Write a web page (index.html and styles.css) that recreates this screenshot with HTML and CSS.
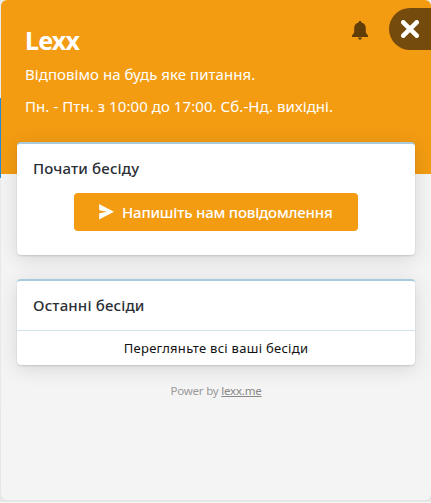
FILE: index.html
```html
<!DOCTYPE html>
<html lang="uk">
<head>
<meta charset="utf-8">
<title>Lexx</title>
<link rel="stylesheet" href="styles.css">
</head>
<body>
<div class="edge"></div>
<main class="panel">
  <header class="header">
    <h1 class="title"><span>Lexx</span></h1>
    <p class="line intro"><span>Відповімо на будь яке питання.</span></p>
    <p class="line hours"><span>Пн. - Птн. з 10:00 до 17:00. Сб.-Нд. вихідні.</span></p>
    <svg class="bell" viewBox="0 0 18 20"><path d="M9 1C8 1 7.600 1.600 7.600 2.500C4.700 3.200 3.200 5.200 3.200 8.200V12.600L1 15.400V16.900H17V15.400L14.800 12.600V8.200C14.800 5.200 13.300 3.200 10.400 2.500C10.400 1.600 10 1 9 1ZM7.200 17.500C7.200 20.400 10.800 20.400 10.800 17.500Z"/></svg>
    <button class="close" aria-label="Закрити"><svg viewBox="0 0 18 18"><path d="M2.300 2.300L15.700 15.700M15.700 2.300L2.300 15.700"/></svg></button>
  </header>
  <section class="card start">
    <h2 class="heading"><span>Почати бесіду</span></h2>
    <button class="send">
      <svg viewBox="0 0 16 16"><path d="M1 0L16 7.700L1 15.600L1.300 9.300L9 7.700L1.300 6.300Z"/></svg>
      <span>Напишіть нам повідомлення</span>
    </button>
  </section>
  <section class="card recent">
    <h2 class="heading"><span>Останні бесіди</span></h2>
    <div class="all"><span>Перегляньте всі ваші бесіди</span></div>
  </section>
  <footer class="footer"><span>Power by <a>lexx.me</a></span></footer>
</main>
</body>
</html>
```
FILE: styles.css
```css
* { box-sizing: border-box; }
body {
  margin: 0;
  height: 503px;
  overflow: hidden;
  display: flex;
  background: linear-gradient(#e9edf2 0 174px, #e9e9e9 180px, #e6e6e6 502px, #f8f8f8 502px);
  font-family: "Noto Sans", "Open Sans", sans-serif;
}
h1, h2, p { margin: 0; font-weight: inherit; }
button { border: 0; padding: 0; font: inherit; }
span { white-space: nowrap; }
.edge { width: 1px; height: 80px; margin-top: 98px; background: #2489db; }
.panel {
  position: relative;
  width: 430px;
  height: 500px;
  border-radius: 6px;
  overflow: hidden;
  background: #f4f4f4;
}
.header {
  height: 174px;
  padding: 23px 24px 0;
  background: #f39c12;
  color: #fff;
}
.title { height: 35px; font-size: 25px; line-height: 34px; font-weight: 700; letter-spacing: -.8px; }
.line { height: 32px; font-size: 15px; line-height: 32px; }
.intro { letter-spacing: .05px; }
.hours { letter-spacing: .07px; }
.bell { position: absolute; left: 350px; top: 20px; width: 18px; height: 20px; fill: #613e07; }
.close {
  position: absolute;
  left: 388px;
  top: 8px;
  width: 42px;
  height: 42px;
  border-radius: 21px 0 0 21px;
  background: #754b0d;
}
.close svg { display: block; width: 18px; height: 18px; margin-left: 12px; fill: none; stroke: #fff; stroke-width: 4.600; stroke-linecap: round; }
.card {
  position: relative;
  margin: 0 16px;
  border-top: 2px solid #a9cadb;
  border-radius: 4px;
  background: #fff;
  box-shadow: 0 1px 2px rgba(0,0,0,.14), 0 4px 20px rgba(0,0,0,.12);
}
.start { height: 113px; margin-top: -32px; }
.recent { height: 86px; margin-top: 24px; }
.heading { height: 49px; padding: 0 16px; line-height: 49px; font-size: 15px; font-weight: 500; letter-spacing: .15px; color: #2b2f36; }
.send {
  display: flex;
  align-items: center;
  width: 284px;
  height: 38px;
  margin: 0 auto;
  padding-left: 24px;
  gap: 8px;
  border-radius: 4px;
  background: #f39c12;
  color: #fff;
  font-size: 15px;
  font-weight: 500;
  letter-spacing: -.2px;
}
.send svg { width: 16px; height: 16px; fill: #fff; }
.all {
  height: 35px;
  border-top: 1px solid #d2e3ec;
  text-align: center;
  line-height: 34px;
  font-size: 13px;
  letter-spacing: .28px;
  color: #111;
}
.footer { margin-top: 16px; text-align: center; line-height: 20px; font-size: 11.500px; letter-spacing: -.2px; color: #999; }
.footer a { color: #888; text-decoration: underline; }
```
